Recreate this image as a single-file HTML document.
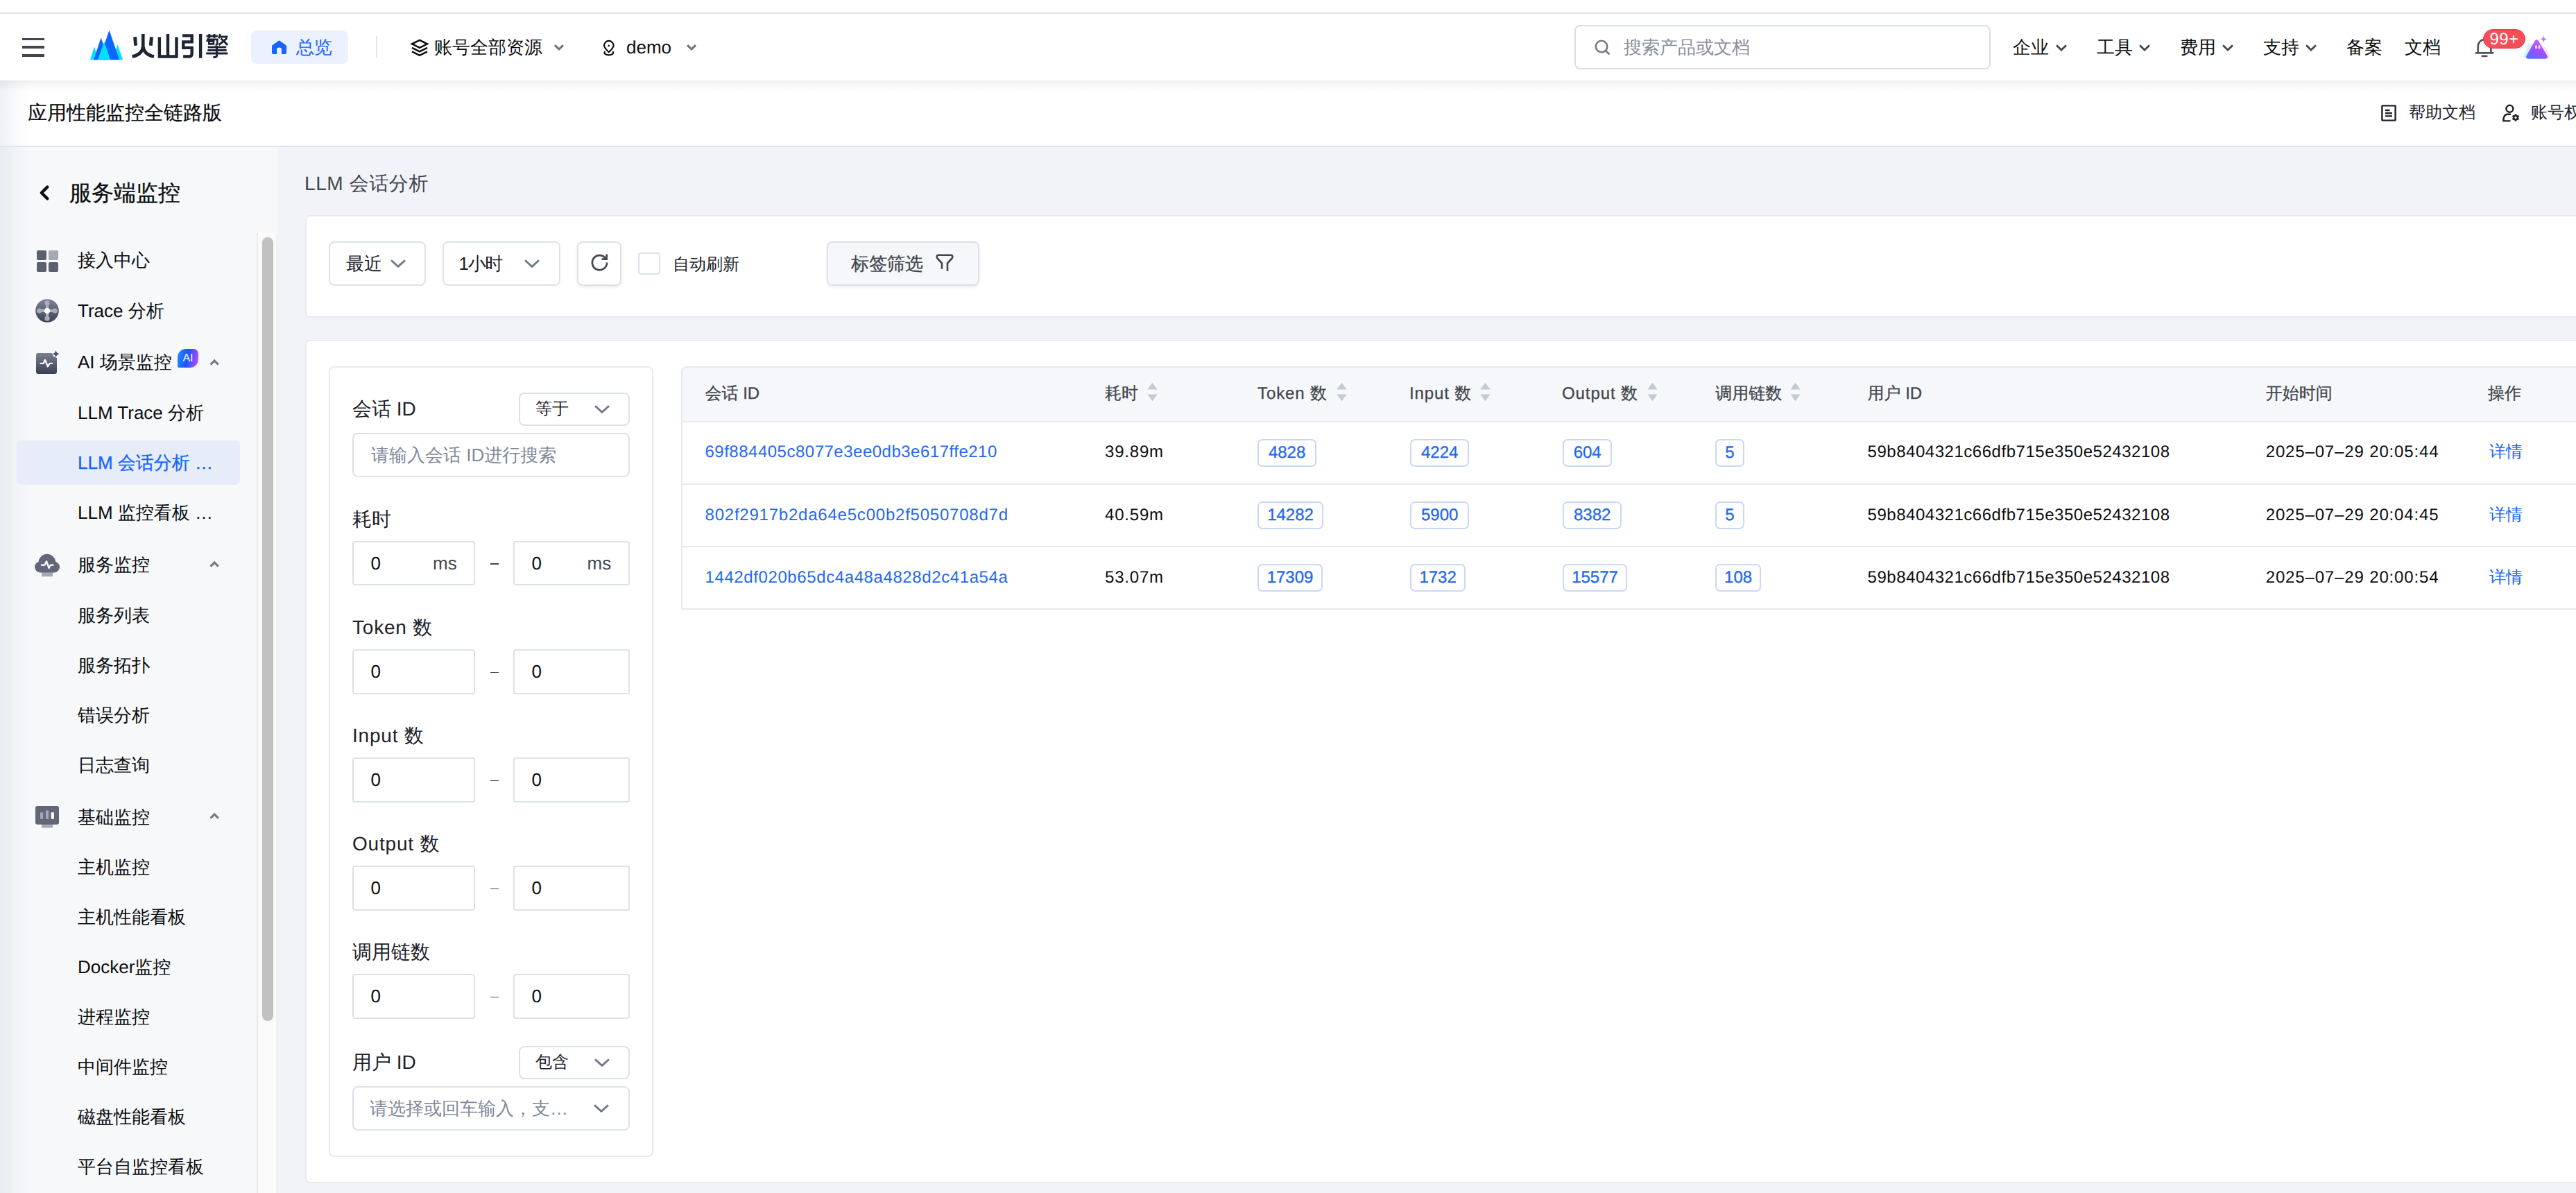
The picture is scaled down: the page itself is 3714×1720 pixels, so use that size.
<!DOCTYPE html>
<html lang="zh">
<head>
<meta charset="utf-8">
<title>LLM 会话分析</title>
<style>
*{box-sizing:border-box;margin:0;padding:0}
html,body{width:3714px;height:1720px;overflow:hidden}
body{position:relative;text-rendering:geometricPrecision;background:#F1F3F8;font-family:"Liberation Sans",sans-serif;color:#0C0D0E;font-size:26px}
.abs{position:absolute}
.t{position:absolute;white-space:nowrap;line-height:40px;height:40px}
svg{position:absolute;display:block;overflow:visible}
/* top */
#topstrip{left:0;top:0;width:3714px;height:18px;background:#fff;z-index:7}
#topline{left:0;top:18px;width:3714px;height:2px;background:#E0E2E1;z-index:7}
#nav{left:0;top:20px;width:3714px;height:96px;background:#fff;z-index:5}
#navsh{left:0;top:116px;width:3714px;height:18px;background:linear-gradient(rgba(0,0,0,.062) 0,rgba(0,0,0,.035) 30%,rgba(0,0,0,.012) 65%,rgba(0,0,0,0) 100%);z-index:5}
#sub{left:0;top:116px;width:3714px;height:94px;background:linear-gradient(90deg,#EEF0F4 0,#F8F9FB 20px,#fff 46px,#fff 100%);z-index:4}
#subline{left:0;top:210px;width:3714px;height:2px;background:#E1E4EC;z-index:4}
/* sidebar */
#side{left:0;top:212px;width:400px;height:1508px;background:linear-gradient(90deg,#E8EBF1 0,#F0F2F6 20px,#F6F8FA 46px,#F6F8FA 100%)}
.nm{font-size:26px;color:#0C0D0E}

.card{position:absolute;background:#fff;border:2px solid #E7EAF0;border-right:none;border-radius:7px 0 0 7px}
.sel{position:absolute;border:2px solid #DDE2E9;border-radius:8px;background:#fff}
.inp{position:absolute;border:2px solid #DDE2E9;border-radius:4px;background:#fff}
.lb{font-size:28px;color:#1D2129;line-height:42px;height:42px}
.num{font-size:26px;color:#0C0D0E}
.dash{font-size:24px;color:#42464E}
.th{font-size:24px;color:#42464E;font-weight:500;-webkit-text-stroke:0.3px #42464E}
.td{font-size:24px;color:#0C0D0E;letter-spacing:0.53px}
.lnk{font-size:24px;color:#2468F2;letter-spacing:0.5px}
.tag{position:absolute;height:40px;-webkit-text-stroke:0.35px #2468F2;border:2px solid #C9D8F8;border-radius:7px;background:#fff;color:#2468F2;font-size:24px;line-height:35px;text-align:center;font-weight:500;white-space:nowrap}
.hl{position:absolute;background:#E6E9F0;height:2px}
.mi{font-size:26px;color:#0C0D0E}
</style>
</head>
<body>
<div id="topstrip" class="abs"></div>
<div id="topline" class="abs"></div>
<div id="nav" class="abs"></div>
<div id="navsh" class="abs"></div>
<div id="sub" class="abs"></div>
<div id="subline" class="abs"></div>
<div id="side" class="abs"></div>

<!-- NAV CONTENT -->
<div id="navc" class="abs" style="left:0;top:0;width:3714px;height:116px;z-index:6">
  <!-- hamburger -->
  <div class="abs" style="left:32px;top:54.5px;width:32px;height:3.5px;background:#42464E"></div>
  <div class="abs" style="left:32px;top:66.3px;width:32px;height:3.5px;background:#42464E"></div>
  <div class="abs" style="left:32px;top:78px;width:32px;height:3.5px;background:#42464E"></div>
  <!-- logo -->
  <svg style="left:130px;top:43px" width="48" height="44" viewBox="130 43 48 44">
    <polygon points="130,86.2 136,67 141.8,86.2" fill="#00E5FF"/>
    <polygon points="163,86.2 169.5,64 177.2,86.2" fill="#00E5FF"/>
    <polygon points="135,86.2 145.7,54.3 156,86.2" fill="#0B66FF"/>
    <polygon points="143,86.2 157.5,43.4 172.2,86.2" fill="#0B66FF"/>
    <polygon points="141,86.2 150.2,60 159.2,86.2" fill="#00E0FF"/>
  </svg>
  <svg id="logot" style="left:186px;top:44px" width="150" height="46" viewBox="186 44 150 46" fill="none" stroke="#1D2433" stroke-width="4.4">
    <title>火山引擎</title>
    <path d="M194.6 53.2 L195.6 65.8 M218.5 53.2 L217.3 65.8" stroke-width="4.9"/>
    <path d="M206.3 49.1 V66 Q205.6 78.5 190.6 81.6 M206.3 66 Q207 78.5 222 81.6" stroke-width="4.6"/>
    <path d="M229.9 53.4 V81.5 H254.5 V53.4 M242 49.1 V81.5"/>
    <path d="M263.1 51.4 H276.7 V60.4 H264.3 V68.9 H276.7 V77.6 Q276.7 81.5 272.8 81.5 H264.1 M289.1 49.1 V83.7"/>
    <g stroke-width="3">
      <path d="M297.6 52.1 H313.9 M301.8 49.1 V54.9 M309 49.1 V54.9"/>
      <path d="M300.4 55 L298.2 60 M299.2 56.9 H313.3 V62 Q313.3 64.6 310.6 64.6 M301.3 59.6 H308 V63.4 H301.3 Z" stroke-width="2.7"/>
      <path d="M317.5 49.3 L315.6 55.2 M316.6 52.9 H328.4 M318.6 55.5 L328.2 64.9 M327.2 55.2 L315.4 64.9"/>
      <path d="M299.8 67.9 H326.2 M299.3 72.6 H326.7 M297.2 77.1 H328.4"/>
      <path d="M312.6 65.9 V79.5 Q312.6 82.4 309.8 82.4 H307.4" stroke-width="3"/>
    </g>
  </svg>
  <!-- overview pill -->
  <div class="abs" style="left:362px;top:44px;width:140px;height:48px;border-radius:8px;background:#EBF1FF"></div>
  <svg style="left:392px;top:58px" width="21" height="20" viewBox="0 0 21 20"><path d="M10.5 0.3 L20.4 7.2 Q21 7.7 21 8.5 V18 Q21 20 19 20 H14 V13.5 Q14 10.5 10.5 10.5 Q7 10.5 7 13.5 V20 H2 Q0 20 0 18 V8.5 Q0 7.7 0.6 7.2 Z" fill="#1664FF"/></svg>
  <div class="t" id="ov" style="left:427px;top:48px;color:#1664FF;font-size:26px">总览</div>
  <div class="abs" style="left:542px;top:52px;width:2px;height:32px;background:#E4E6EB"></div>
  <!-- layers -->
  <svg style="left:592px;top:55.5px" width="26" height="26" viewBox="0 0 26 26" fill="none" stroke="#0C0D0E" stroke-width="2.5" stroke-linejoin="miter"><path d="M13 1.8 L24 7.3 L13 12.8 L2 7.3 Z"/><path d="M2 12.8 L13 18.3 L24 12.8"/><path d="M2 18.3 L13 23.8 L24 18.3"/></svg>
  <div class="t" id="acct" style="left:626px;top:48px;font-size:26px">账号全部资源</div>
  <svg style="left:799px;top:63.5px" width="14" height="9" viewBox="0 0 14 9" fill="none" stroke="#6B7285" stroke-width="3" ><path d="M1 1.2 L7 7 L13 1.2"/></svg>
  <!-- location -->
  <svg style="left:869.3px;top:57.5px" width="18" height="23" viewBox="0 0 18 23" fill="none" stroke="#0C0D0E" stroke-width="2.1"><path d="M8.8 17.3 C4.6 13 2 10.6 2 7.7 A6.8 6.8 0 0 1 15.6 7.7 C15.6 10.6 13 13 8.8 17.3 Z" stroke-linejoin="round"/><path d="M8.8 6.2 L10.4 7.8 L8.8 9.4 L7.2 7.8 Z" fill="#0C0D0E" stroke="none"/><path d="M2.8 16.8 C1.7 19.6 4.6 21.4 8.8 21.4 C13 21.4 15.9 19.6 14.8 16.8" stroke-linecap="round"/></svg>
  <div class="t" id="demo" style="left:903px;top:48px;font-size:26px">demo</div>
  <svg style="left:990px;top:63.5px" width="14" height="9" viewBox="0 0 14 9" fill="none" stroke="#6B7285" stroke-width="3" ><path d="M1 1.2 L7 7 L13 1.2"/></svg>
  <!-- search -->
  <div class="abs" style="left:2270.2px;top:36px;width:599.8px;height:63.8px;border:2px solid #D9DEE7;border-radius:8px;background:#fff"></div>
  <svg style="left:2299px;top:56.5px" width="23" height="23" viewBox="0 0 23 23" fill="none" stroke="#737A87" stroke-width="2.6"><circle cx="10" cy="10" r="8.3"/><path d="M16 16 L21.5 21.5"/></svg>
  <div class="t" id="sph" style="left:2341px;top:48px;font-size:26px;color:#8A909C">搜索产品或文档</div>
  <!-- right menu -->
  <div class="t nm" style="left:2902px;top:48px">企业</div>
  <svg style="left:2964px;top:63.5px" width="16" height="10" viewBox="0 0 16 10" fill="none" stroke="#42464E" stroke-width="2.8"><path d="M1 1.2 L8 8 L15 1.2"/></svg>
  <div class="t nm" style="left:3023px;top:48px">工具</div>
  <svg style="left:3084px;top:63.5px" width="16" height="10" viewBox="0 0 16 10" fill="none" stroke="#42464E" stroke-width="2.8"><path d="M1 1.2 L8 8 L15 1.2"/></svg>
  <div class="t nm" style="left:3143px;top:48px">费用</div>
  <svg style="left:3204px;top:63.5px" width="16" height="10" viewBox="0 0 16 10" fill="none" stroke="#42464E" stroke-width="2.8"><path d="M1 1.2 L8 8 L15 1.2"/></svg>
  <div class="t nm" style="left:3263px;top:48px">支持</div>
  <svg style="left:3324px;top:63.5px" width="16" height="10" viewBox="0 0 16 10" fill="none" stroke="#42464E" stroke-width="2.8"><path d="M1 1.2 L8 8 L15 1.2"/></svg>
  <div class="t nm" style="left:3383px;top:48px">备案</div>
  <div class="t nm" style="left:3467px;top:48px">文档</div>
  <!-- bell -->
  <svg style="left:3568px;top:55px" width="28" height="28" viewBox="3568 55 28 28" fill="none" stroke="#4E5562" stroke-width="2.7" stroke-linecap="round"><path d="M3572.7 76 V66.5 A9.3 9.3 0 0 1 3591.4 66.5 V76"/><path d="M3570 76.4 H3594.2"/><path d="M3578.8 80.9 H3585.2"/></svg>
  <div class="abs" id="badge" style="left:3580px;top:42px;width:61px;height:28px;border-radius:14px;background:#F54E58;border:1px solid #E63946;color:#fff;font-size:24px;line-height:27px;text-align:center;letter-spacing:0.5px">99+</div>
  <!-- avatar -->
  <svg style="left:3636px;top:50px" width="44" height="36" viewBox="3636 50 44 36">
    <defs>
      <linearGradient id="avg" x1="0.7" y1="0" x2="0.2" y2="1"><stop offset="0" stop-color="#D768FF"/><stop offset="0.5" stop-color="#A04DFF"/><stop offset="1" stop-color="#5570FF"/></linearGradient>
    </defs>
    <path d="M3645 63.5 Q3646 62.5 3649 63 L3652 64 L3642 84 L3638 83 Z" fill="#C9F0FA" opacity=".8"/>
    <path d="M3666 67 Q3669 66 3670.5 69 L3677 83 L3672 84 Z" fill="#F7D9FB" opacity=".7"/>
    <path d="M3655 58.6 Q3657.3 55.4 3659.6 58.6 L3672.6 80.6 Q3674 84.6 3670 84.7 H3645 Q3641 84.6 3642.4 80.6 Z" fill="url(#avg)"/>
    <ellipse cx="3656.4" cy="67.8" rx="1.3" ry="2.8" fill="#fff"/>
    <ellipse cx="3661" cy="67.8" rx="1.3" ry="2.8" fill="#fff"/>
    <path d="M3667.2 51.8 Q3667.9 55.8 3671.9 56.5 Q3667.9 57.2 3667.2 61.2 Q3666.5 57.2 3662.5 56.5 Q3666.5 55.8 3667.2 51.8 Z" fill="#D768FF"/>
  </svg>
</div>
<!-- SUB HEADER -->
<div id="subc" class="abs" style="left:0;top:116px;width:3714px;height:94px;z-index:6">
  <div class="t" id="subt" style="-webkit-text-stroke:0.25px #0C0D0E;left:40px;top:26px;font-size:28px;font-weight:500;color:#0C0D0E;line-height:42px;height:42px">应用性能监控全链路版</div>
  <svg style="left:3433px;top:35px" width="22" height="24" viewBox="0 0 22 24" fill="none" stroke="#1D2129" stroke-width="2.4"><rect x="1.4" y="1.4" width="19.2" height="21.2" rx="0.5"/><path d="M6 8 H12.5 M6 12.2 H16 M6 16.4 H16"/></svg>
  <div class="t" id="help" style="left:3473px;top:26.5px;font-size:24px;color:#1D2129">帮助文档</div>
  <svg style="left:3608px;top:34.5px" width="25" height="25" viewBox="0 0 25 25" fill="none" stroke="#1D2129" stroke-width="2.4"><circle cx="10.4" cy="5.8" r="5"/><path d="M12 13.7 H7.5 C3.3 13.7 1.3 17 1.3 23.4 H11.5" stroke-linejoin="round"/><circle cx="19" cy="18.6" r="2.9" stroke-width="2.5"/><path d="M19.00 22.10 L19.00 23.80 M15.97 20.35 L14.50 21.20 M15.97 16.85 L14.50 16.00 M19.00 15.10 L19.00 13.40 M22.03 16.85 L23.50 16.00 M22.03 20.35 L23.50 21.20" stroke-width="2.7"/></svg>
  <div class="t" id="acc2" style="left:3649px;top:26.5px;font-size:24px;color:#1D2129">账号权限</div>
</div>

<!-- SIDEBAR CONTENT -->
<div id="sidec" class="abs" style="left:0;top:0;width:400px;height:1720px;z-index:3">
  <svg style="left:56px;top:267px" width="17" height="22" viewBox="0 0 17 22" fill="none" stroke="#0C0D0E" stroke-width="4.3" stroke-linecap="round" stroke-linejoin="round"><path d="M12.3 2.6 L3.8 11 L12.3 19.4"/></svg>
  <div class="t" id="stitle" style="-webkit-text-stroke:0.3px #0C0D0E;left:100px;top:255px;font-size:32px;font-weight:500;line-height:46px;height:46px;color:#0C0D0E">服务端监控</div>
  <div class="abs" style="left:370px;top:336px;width:2px;height:1384px;background:#E9EAEE"></div>
  <div class="abs" style="left:372px;top:336px;width:26px;height:1384px;background:#FAFAFA"></div>
  <div class="abs" style="left:398px;top:336px;width:2px;height:1384px;background:#F0F1F4"></div>
  <div class="abs" style="left:378px;top:342px;width:16px;height:1130px;border-radius:8px;background:#C1C1C1"></div>
  <div class="abs" style="left:24px;top:635px;width:322px;height:64px;border-radius:8px;background:#E6ECF8"></div>
  <div class="t mi" id="mi0" style="left:112px;top:355px;color:#0C0D0E">接入中心</div>
  <div class="t mi" id="mi1" style="left:112px;top:428px;color:#0C0D0E">Trace 分析</div>
  <div class="t mi" id="mi2" style="left:112px;top:501.5px;color:#0C0D0E">AI 场景监控</div>
  <div class="t mi" id="mi3" style="left:112px;top:575px;color:#0C0D0E">LLM Trace 分析</div>
  <div class="t mi" id="mi4" style="-webkit-text-stroke:0.3px #1664FF;left:112px;top:647px;color:#1664FF">LLM 会话分析 …</div>
  <div class="t mi" id="mi5" style="left:112px;top:719px;color:#0C0D0E">LLM 监控看板 …</div>
  <div class="t mi" id="mi6" style="left:112px;top:793.7px;color:#0C0D0E">服务监控</div>
  <div class="t mi" id="mi7" style="left:112px;top:866.5px;color:#0C0D0E">服务列表</div>
  <div class="t mi" id="mi8" style="left:112px;top:938.5px;color:#0C0D0E">服务拓扑</div>
  <div class="t mi" id="mi9" style="left:112px;top:1010.5px;color:#0C0D0E">错误分析</div>
  <div class="t mi" id="mi10" style="left:112px;top:1082.5px;color:#0C0D0E">日志查询</div>
  <div class="t mi" id="mi11" style="left:112px;top:1157.5px;color:#0C0D0E">基础监控</div>
  <div class="t mi" id="mi12" style="left:112px;top:1229.5px;color:#0C0D0E">主机监控</div>
  <div class="t mi" id="mi13" style="left:112px;top:1301.5px;color:#0C0D0E">主机性能看板</div>
  <div class="t mi" id="mi14" style="left:112px;top:1374px;color:#0C0D0E">Docker监控</div>
  <div class="t mi" id="mi15" style="left:112px;top:1445.7px;color:#0C0D0E">进程监控</div>
  <div class="t mi" id="mi16" style="left:112px;top:1518px;color:#0C0D0E">中间件监控</div>
  <div class="t mi" id="mi17" style="left:112px;top:1590px;color:#0C0D0E">磁盘性能看板</div>
  <div class="t mi" id="mi18" style="left:112px;top:1662px;color:#0C0D0E">平台自监控看板</div>
  <div class="abs" style="left:53px;top:361px;width:13.5px;height:13.5px;border-radius:2px;background:#5B6071"></div>
  <div class="abs" style="left:70px;top:361px;width:13.5px;height:13.5px;border-radius:2px;background:#A5A9B5"></div>
  <div class="abs" style="left:53px;top:378px;width:13.5px;height:13.5px;border-radius:2px;background:#5B6071"></div>
  <div class="abs" style="left:70px;top:378px;width:13.5px;height:13.5px;border-radius:2px;background:#5B6071"></div>
  <svg style="left:51px;top:431px" width="34" height="34" viewBox="0 0 34 34">
    <defs><linearGradient id="trg" x1="0" y1="0" x2="0" y2="1"><stop offset="0" stop-color="#7E8498"/><stop offset="1" stop-color="#3C4154"/></linearGradient></defs>
    <circle cx="17" cy="17" r="16.8" fill="url(#trg)"/>
    <g fill="#A9ADB9"><rect x="15" y="5" width="4" height="24"/><rect x="5" y="15" width="24" height="4"/><circle cx="17" cy="5.8" r="3.6"/><circle cx="17" cy="28.2" r="3.6"/><circle cx="5.8" cy="17" r="3.6"/><circle cx="28.2" cy="17" r="3.6"/></g>
    <circle cx="17" cy="17" r="4.3" fill="#fff"/>
  </svg>
  <svg style="left:51px;top:504px" width="36" height="36" viewBox="51 504 36 36">
    <defs><linearGradient id="aig" x1="0" y1="0" x2="0" y2="1"><stop offset="0" stop-color="#7A8094"/><stop offset="1" stop-color="#3A3F52"/></linearGradient></defs>
    <path d="M55 509 H75 Q76 514.5 82 516 V536 Q82 539 79 539 H55 Q52 539 52 536 V512 Q52 509 55 509 Z" fill="url(#aig)"/>
    <path d="M57.5 524 H62.5 L65 519 L69 528.5 L71.5 524 H76" fill="none" stroke="#fff" stroke-width="2.2" stroke-linejoin="round"/>
    <path d="M80.6 505 Q81.4 509.4 86 510.3 Q81.4 511.2 80.6 515.6 Q79.8 511.2 75.2 510.3 Q79.8 509.4 80.6 505 Z" fill="#4E5467"/>
  </svg>
  <div class="abs" id="aib" style="left:256px;top:503px;width:30px;height:27px;border-radius:12px 7px 12px 2px;background:linear-gradient(100deg,#2F8BFF 0%,#1257FF 45%,#8A4DFF 80%,#C65BF0 100%);color:#fff;font-size:16px;font-weight:500;line-height:27px;text-align:center;letter-spacing:0">AI</div>
  <svg style="left:302px;top:516.5px" width="15" height="11" viewBox="0 0 15 11" fill="none" stroke="#737A8C" stroke-width="3.2"><path d="M1.6 8.7 L7.2 3.1 L12.8 8.7"/></svg>
  <svg style="left:302px;top:807.7px" width="15" height="11" viewBox="0 0 15 11" fill="none" stroke="#737A8C" stroke-width="3.2"><path d="M1.6 8.7 L7.2 3.1 L12.8 8.7"/></svg>
  <svg style="left:302px;top:1170.8px" width="15" height="11" viewBox="0 0 15 11" fill="none" stroke="#737A8C" stroke-width="3.2"><path d="M1.6 8.7 L7.2 3.1 L12.8 8.7"/></svg>
  <svg style="left:49px;top:798px" width="38" height="34" viewBox="49 798 38 34">
    <rect x="60" y="824" width="16" height="7.2" rx="1" fill="#A5A9B5"/>
    <g fill="#616779"><circle cx="67.9" cy="811.2" r="12.4"/><circle cx="57.8" cy="817.6" r="7.8"/><circle cx="78.2" cy="817.6" r="7.8"/><rect x="57.8" y="812" width="20.4" height="13.4"/></g>
    <path d="M59 814.6 H64.5 L67 809.2 L70.6 819 L72.8 814.6 H77.5" fill="none" stroke="#fff" stroke-width="2.3" stroke-linejoin="round"/>
  </svg>
  <svg style="left:50px;top:1161px" width="36" height="34" viewBox="50 1161 36 34">
    <rect x="60" y="1187" width="16" height="6.6" rx="1" fill="#A5A9B5"/>
    <rect x="51" y="1162" width="34" height="26.8" rx="3" fill="#616779"/>
    <rect x="58" y="1171.3" width="4.2" height="9.5" rx="0.6" fill="#A5A9B5"/>
    <rect x="65.9" y="1168.6" width="4.2" height="12.2" rx="0.6" fill="#A5A9B5"/>
    <rect x="73.7" y="1171.3" width="4.2" height="9.5" rx="0.6" fill="#fff"/>
  </svg>
</div>

<!-- MAIN CONTENT -->
<div id="main" class="abs" style="left:0;top:0;width:3714px;height:1720px;z-index:2">
  <div class="t" id="ptitle" style="letter-spacing:0.6px;left:439px;top:244px;font-size:28px;color:#42464E;line-height:42px;height:42px">LLM 会话分析</div>
  <div class="card" style="left:440.2px;top:310.2px;width:3300px;height:147.6px"></div>
  <div class="sel" style="left:474px;top:348px;width:139.5px;height:64px"></div>
  <div class="t" id="c1a" style="left:499px;top:360px;font-size:26px;color:#1D2129">最近</div>
  <svg style="left:562.7px;top:374px" width="22" height="12" viewBox="0 0 22 12" fill="none" stroke="#6E7687" stroke-width="2.8"><path d="M1 1.2 L11.0 10.4 L21 1.2"/></svg>
  <div class="sel" style="left:638px;top:348px;width:169.5px;height:64px"></div>
  <div class="t" id="c1b" style="letter-spacing:-1.3px;left:661.5px;top:360px;font-size:26px;color:#1D2129">1小时</div>
  <svg style="left:756.2px;top:374px" width="22" height="12" viewBox="0 0 22 12" fill="none" stroke="#6E7687" stroke-width="2.8"><path d="M1 1.2 L11.0 10.4 L21 1.2"/></svg>
  <div class="sel" style="left:832px;top:348px;width:63.5px;height:64px;box-shadow:0 2px 4px rgba(0,0,0,.08)"></div>
  <svg style="left:851px;top:365px" width="27" height="27" viewBox="0 0 27 27" fill="none" stroke="#42464E" stroke-width="2.7"><path d="M22.6 8.2 A10.6 10.6 0 1 0 24.1 13.5"/><path d="M23.6 1.5 V8.6 H16.5" stroke-linejoin="miter"/></svg>
  <div class="abs" style="left:919.5px;top:363.5px;width:32.5px;height:32.5px;border:2px solid #DDE2E9;border-radius:4px;background:#fff"></div>
  <div class="t" id="c1c" style="left:970px;top:362px;font-size:24px;color:#1D2129">自动刷新</div>
  <div class="sel" style="left:1191.8px;top:348.0px;width:220.2px;height:64.0px;background:#F6F7FA;box-shadow:0 2px 4px rgba(0,0,0,.08)"></div>
  <div class="t" id="c1d" style="-webkit-text-stroke:0.3px #42464E;left:1227px;top:360px;font-size:26px;color:#42464E">标签筛选</div>
  <svg style="left:1348px;top:365px" width="28" height="28" viewBox="0 0 28 28" fill="none" stroke="#42464E" stroke-width="2.6" stroke-linejoin="round"><path d="M10 22.8 V14.5 L3.5 7.5 Q2.5 6.3 2.7 4.8 Q3 2.7 5 2.7 H23 Q25 2.7 25.3 4.8 Q25.5 6.3 24.5 7.5 L18 14.5 V26.1"/></svg>
  <div class="card" style="left:440.2px;top:490.1px;width:3300px;height:1215.6px"></div>
  <div class="abs" style="left:474px;top:527.8px;width:468px;height:1140px;border:2px solid #E7EAF0;border-radius:7px"></div>
  <div class="t lb" id="f0" style="left:508px;top:569px">会话 ID</div>
  <div class="sel" style="left:748px;top:566px;width:159.5px;height:48px"></div>
  <div class="t" id="f0s" style="left:772px;top:570px;font-size:24px;color:#1D2129">等于</div>
  <svg style="left:857.2px;top:584px" width="22" height="12" viewBox="0 0 22 12" fill="none" stroke="#6E7687" stroke-width="2.8"><path d="M1 1.2 L11.0 10.4 L21 1.2"/></svg>
  <div class="sel" style="left:507.5px;top:624px;width:400px;height:64px"></div>
  <div class="t" id="f0p" style="left:535px;top:636px;font-size:26px;color:#808999">请输入会话 ID进行搜索</div>
  <div class="t lb" id="g0" style="left:508px;top:728px">耗时</div>
  <div class="inp" style="left:507.5px;top:779.5px;width:177.5px;height:64.5px"></div>
  <div class="inp" style="left:740px;top:779.5px;width:167.5px;height:64.5px"></div>
  <div class="t num" style="left:534.5px;top:791.5px">0</div>
  <div class="t num" style="left:766.5px;top:791.5px">0</div>
  <div class="abs" style="left:706.5px;top:812px;width:12.5px;height:1.6px;background:#42464E"></div>
  <div class="t num" style="left:624px;top:792px;color:#42464E">ms</div>
  <div class="t num" style="left:846.5px;top:792px;color:#42464E">ms</div>
  <div class="t lb" id="g1" style="letter-spacing:0.8px;left:508px;top:884px">Token 数</div>
  <div class="inp" style="left:507.5px;top:936px;width:177.5px;height:64.5px"></div>
  <div class="inp" style="left:740px;top:936px;width:167.5px;height:64.5px"></div>
  <div class="t num" style="left:534.5px;top:948.0px">0</div>
  <div class="t num" style="left:766.5px;top:948.0px">0</div>
  <div class="abs" style="left:706.5px;top:968.5px;width:12.5px;height:1.6px;background:#42464E"></div>
  <div class="t lb" id="g2" style="letter-spacing:0.8px;left:508px;top:1040px">Input 数</div>
  <div class="inp" style="left:507.5px;top:1092px;width:177.5px;height:64.5px"></div>
  <div class="inp" style="left:740px;top:1092px;width:167.5px;height:64.5px"></div>
  <div class="t num" style="left:534.5px;top:1104.0px">0</div>
  <div class="t num" style="left:766.5px;top:1104.0px">0</div>
  <div class="abs" style="left:706.5px;top:1124.5px;width:12.5px;height:1.6px;background:#42464E"></div>
  <div class="t lb" id="g3" style="letter-spacing:0.8px;left:508px;top:1196px">Output 数</div>
  <div class="inp" style="left:507.5px;top:1248px;width:177.5px;height:64.5px"></div>
  <div class="inp" style="left:740px;top:1248px;width:167.5px;height:64.5px"></div>
  <div class="t num" style="left:534.5px;top:1260.0px">0</div>
  <div class="t num" style="left:766.5px;top:1260.0px">0</div>
  <div class="abs" style="left:706.5px;top:1280.5px;width:12.5px;height:1.6px;background:#42464E"></div>
  <div class="t lb" id="g4" style="left:508px;top:1352px">调用链数</div>
  <div class="inp" style="left:507.5px;top:1404px;width:177.5px;height:64.5px"></div>
  <div class="inp" style="left:740px;top:1404px;width:167.5px;height:64.5px"></div>
  <div class="t num" style="left:534.5px;top:1416.0px">0</div>
  <div class="t num" style="left:766.5px;top:1416.0px">0</div>
  <div class="abs" style="left:706.5px;top:1436.5px;width:12.5px;height:1.6px;background:#42464E"></div>
  <div class="t lb" id="f6" style="left:508px;top:1511px">用户 ID</div>
  <div class="sel" style="left:748px;top:1508px;width:159.5px;height:48px"></div>
  <div class="t" id="f6s" style="left:772px;top:1512px;font-size:24px;color:#1D2129">包含</div>
  <svg style="left:857.2px;top:1526px" width="22" height="12" viewBox="0 0 22 12" fill="none" stroke="#6E7687" stroke-width="2.8"><path d="M1 1.2 L11.0 10.4 L21 1.2"/></svg>
  <div class="sel" style="left:507.5px;top:1566px;width:400px;height:64px"></div>
  <div class="t" id="f6p" style="left:533px;top:1578px;font-size:26px;color:#808999">请选择或回车输入，支…</div>
  <svg style="left:855.5px;top:1592px" width="22" height="12" viewBox="0 0 22 12" fill="none" stroke="#6E7687" stroke-width="2.8"><path d="M1 1.2 L11.0 10.4 L21 1.2"/></svg>
  <div class="abs" style="left:982px;top:527.5px;width:2800px;height:81px;background:#F6F7FA;border:2px solid #E6E9F0;border-right:none;border-radius:8px 0 0 0"></div>
  <div class="abs" style="left:981.5px;top:606.5px;width:2px;height:272px;background:#E6E9F0"></div>
  <div class="hl" style="left:981.5px;top:696.8px;width:2800px"></div>
  <div class="hl" style="left:981.5px;top:787px;width:2800px"></div>
  <div class="hl" style="left:981.5px;top:877px;width:2800px"></div>
  <div class="t th" id="h0" style="left:1016.5px;top:548px">会话 ID</div>
  <div class="t th" id="h1" style="left:1593px;top:548px">耗时</div>
  <svg style="left:1653.5px;top:551px" width="15" height="28" viewBox="0 0 15 28"><path d="M7.5 0.8 L14.6 10.6 H0.4 Z" fill="#C4C9D4"/><path d="M7.5 27.2 L14.6 17.4 H0.4 Z" fill="#C4C9D4"/></svg>
  <div class="t th" id="h2" style="letter-spacing:0.9px;left:1813.0px;top:548px">Token 数</div>
  <svg style="left:1926.9px;top:551px" width="15" height="28" viewBox="0 0 15 28"><path d="M7.5 0.8 L14.6 10.6 H0.4 Z" fill="#C4C9D4"/><path d="M7.5 27.2 L14.6 17.4 H0.4 Z" fill="#C4C9D4"/></svg>
  <div class="t th" id="h3" style="letter-spacing:0.9px;left:2031.9px;top:548px">Input 数</div>
  <svg style="left:2133.5px;top:551px" width="15" height="28" viewBox="0 0 15 28"><path d="M7.5 0.8 L14.6 10.6 H0.4 Z" fill="#C4C9D4"/><path d="M7.5 27.2 L14.6 17.4 H0.4 Z" fill="#C4C9D4"/></svg>
  <div class="t th" id="h4" style="letter-spacing:0.9px;left:2252.0px;top:548px">Output 数</div>
  <svg style="left:2375px;top:551px" width="15" height="28" viewBox="0 0 15 28"><path d="M7.5 0.8 L14.6 10.6 H0.4 Z" fill="#C4C9D4"/><path d="M7.5 27.2 L14.6 17.4 H0.4 Z" fill="#C4C9D4"/></svg>
  <div class="t th" id="h5" style="left:2473.3px;top:548px">调用链数</div>
  <svg style="left:2580.5px;top:551px" width="15" height="28" viewBox="0 0 15 28"><path d="M7.5 0.8 L14.6 10.6 H0.4 Z" fill="#C4C9D4"/><path d="M7.5 27.2 L14.6 17.4 H0.4 Z" fill="#C4C9D4"/></svg>
  <div class="t th" id="h6" style="left:2692.5px;top:548px">用户 ID</div>
  <div class="t th" id="h7" style="left:3266.7px;top:548px">开始时间</div>
  <div class="t th" id="h8" style="left:3587px;top:548px">操作</div>
  <div class="t lnk" id="r0a" style="left:1016.5px;top:632px">69f884405c8077e3ee0db3e617ffe210</div>
  <div class="t td" id="r0b" style="letter-spacing:0.8px;left:1593px;top:632px">39.89m</div>
  <div class="tag" id="r0t0" style="left:1813px;top:632.5px;width:85.2px">4828</div>
  <div class="tag" id="r0t1" style="left:2033.1px;top:632.5px;width:85.2px">4224</div>
  <div class="tag" id="r0t2" style="left:2253.2px;top:632.5px;width:71px">604</div>
  <div class="tag" id="r0t3" style="left:2473px;top:632.5px;width:42px">5</div>
  <div class="t td" id="r0u" style="left:2692.5px;top:632px">59b8404321c66dfb715e350e52432108</div>
  <div class="t td" id="r0d" style="letter-spacing:0.85px;left:3266.7px;top:632px">2025–07–29 20:05:44</div>
  <div class="t lnk" id="r0o" style="letter-spacing:0;left:3589px;top:632px;color:#1664FF">详情</div>
  <div class="t lnk" id="r1a" style="letter-spacing:0.78px;left:1016.5px;top:722.5px">802f2917b2da64e5c00b2f5050708d7d</div>
  <div class="t td" id="r1b" style="letter-spacing:0.8px;left:1593px;top:722.5px">40.59m</div>
  <div class="tag" id="r1t0" style="left:1813px;top:723px;width:95px">14282</div>
  <div class="tag" id="r1t1" style="left:2033.1px;top:723px;width:85.2px">5900</div>
  <div class="tag" id="r1t2" style="left:2253.2px;top:723px;width:85px">8382</div>
  <div class="tag" id="r1t3" style="left:2473px;top:723px;width:42px">5</div>
  <div class="t td" id="r1u" style="left:2692.5px;top:722.5px">59b8404321c66dfb715e350e52432108</div>
  <div class="t td" id="r1d" style="letter-spacing:0.85px;left:3266.7px;top:722.5px">2025–07–29 20:04:45</div>
  <div class="t lnk" id="r1o" style="letter-spacing:0;left:3589px;top:722.5px;color:#1664FF">详情</div>
  <div class="t lnk" id="r2a" style="letter-spacing:0.6px;left:1016.5px;top:812.5px">1442df020b65dc4a48a4828d2c41a54a</div>
  <div class="t td" id="r2b" style="letter-spacing:0.8px;left:1593px;top:812.5px">53.07m</div>
  <div class="tag" id="r2t0" style="left:1813px;top:813px;width:94px">17309</div>
  <div class="tag" id="r2t1" style="left:2033.1px;top:813px;width:80px">1732</div>
  <div class="tag" id="r2t2" style="left:2253.2px;top:813px;width:92.7px">15577</div>
  <div class="tag" id="r2t3" style="left:2473px;top:813px;width:66.2px">108</div>
  <div class="t td" id="r2u" style="left:2692.5px;top:812.5px">59b8404321c66dfb715e350e52432108</div>
  <div class="t td" id="r2d" style="letter-spacing:0.85px;left:3266.7px;top:812.5px">2025–07–29 20:00:54</div>
  <div class="t lnk" id="r2o" style="letter-spacing:0;left:3589px;top:812.5px;color:#1664FF">详情</div>
</div>
</body>
</html>
